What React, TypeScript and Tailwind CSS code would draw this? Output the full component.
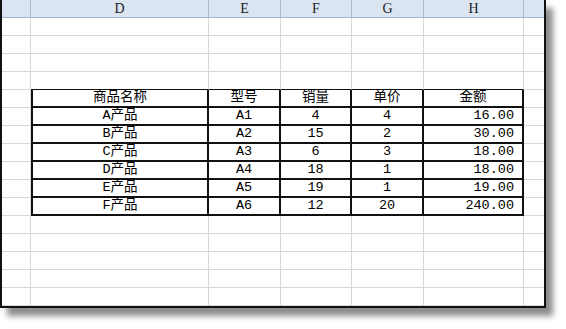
import React from "react";

const colW = ["w-[29px]", "w-[178px]", "w-[72px]", "w-[71px]", "w-[72px]", "w-[100px]", "w-[20px]"];
const letters = ["", "D", "E", "F", "G", "H", ""];

const tableData: string[][] = [
  ["商品名称", "型号", "销量", "单价", "金额"],
  ["A产品", "A1", "4", "4", "16.00"],
  ["B产品", "A2", "15", "2", "30.00"],
  ["C产品", "A3", "6", "3", "18.00"],
  ["D产品", "A4", "18", "1", "18.00"],
  ["E产品", "A5", "19", "1", "19.00"],
  ["F产品", "A6", "12", "20", "240.00"],
];

export default function App() {
  const TABLE_START = 5;
  const rows = 16;
  return (
    <div className="w-[566px] h-[329px] bg-white overflow-hidden">
      <div className="w-[546px] h-[308px] border-l-2 border-r-2 border-b-2 border-[#111] bg-white shadow-[7px_8px_6px_rgba(0,0,0,0.45)]">
        <div className="flex h-[18px]">
          {colW.map((w, i) => (
            <div
              key={i}
              className={
                w +
                " h-[18px] shrink-0 bg-[#dbe5f2] border-b border-[#9fb5cc] flex items-center justify-center text-[14px] text-[#222] font-['Liberation_Serif',serif] " +
                (i < colW.length - 1 ? "border-r border-r-[#a9bbd0]" : "")
              }
            >
              {letters[i]}
            </div>
          ))}
        </div>
        {Array.from({ length: rows }).map((_, r) => {
          const rowNo = r + 1;
          const ti = rowNo - TABLE_START;
          const inTable = ti >= 0 && ti < tableData.length;
          const aboveTable = rowNo === TABLE_START - 1;
          return (
            <div key={r} className="flex h-[18px]">
              {colW.map((w, c) => {
                const isTableCol = c >= 1 && c <= 5;
                let cls = w + " h-[18px] shrink-0 flex items-center ";
                if (inTable && isTableCol) {
                  cls +=
                    "border-b-2 border-r-2 border-[#111] text-black text-[13.5px] whitespace-nowrap font-['Liberation_Mono','Noto_Sans_CJK_SC',monospace] ";
                  if (c === 1) cls += "border-l-2 ";
                  if (c === 5 && ti > 0) cls += "justify-end pr-[8px] ";
                  else cls += "justify-center ";
                } else {
                  cls += "border-b border-[#d5d8dc] ";
                  if (aboveTable && isTableCol) cls += "border-b-[#111] ";
                  if (c < colW.length - 1) cls += "border-r border-r-[#d5d8dc] ";
                }
                return (
                  <div key={c} className={cls}>
                    {inTable && isTableCol ? tableData[ti][c - 1] : null}
                  </div>
                );
              })}
            </div>
          );
        })}
      </div>
    </div>
  );
}
